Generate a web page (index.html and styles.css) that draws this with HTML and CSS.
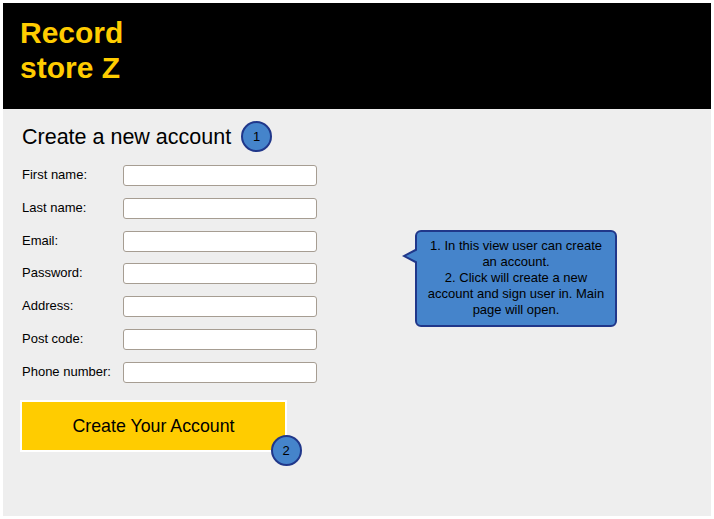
FILE: index.html
```html
<!DOCTYPE html>
<html lang="en">
<head>
<meta charset="utf-8">
<title>Record store Z - Create a new account</title>
<link rel="stylesheet" href="styles.css">
</head>
<body>
<div class="frame">
  <header class="masthead">
    <h1 class="brand">Record<br>store Z</h1>
  </header>
  <main class="content">
    <section class="form-col">
      <div class="title-row">
        <h2 class="title">Create a new account</h2>
        <span class="badge">1</span>
      </div>
      <form class="fields">
        <div class="field"><label class="field-label">First name:</label><input class="field-input" type="text"></div>
        <div class="field"><label class="field-label">Last name:</label><input class="field-input" type="text"></div>
        <div class="field"><label class="field-label">Email:</label><input class="field-input" type="text"></div>
        <div class="field"><label class="field-label">Password:</label><input class="field-input" type="password"></div>
        <div class="field"><label class="field-label">Address:</label><input class="field-input" type="text"></div>
        <div class="field"><label class="field-label">Post code:</label><input class="field-input" type="text"></div>
        <div class="field"><label class="field-label">Phone number:</label><input class="field-input" type="text"></div>
      </form>
      <div class="submit-wrap">
        <button class="submit" type="button">Create Your Account</button>
        <span class="badge badge-corner">2</span>
      </div>
    </section>
    <aside class="callout">
      1. In this view user can create an account.<br>
      2. Click will create a new account and sign user in. Main page will open.
    </aside>
  </main>
</div>
</body>
</html>
```

FILE: styles.css
```css
* { box-sizing: border-box; }

html, body {
  margin: 0;
  padding: 0;
  background: #ffffff;
}

body {
  font-family: "Liberation Sans", Arial, sans-serif;
  color: #000;
  padding: 3px;
}

.frame {
  width: 708px;
  height: 513px;
  display: flex;
  flex-direction: column;
  background: #eeeeee;
}

.masthead {
  height: 106px;
  background: #000;
  padding: 12px 17px 0;
}

.brand {
  margin: 0;
  font-size: 30px;
  line-height: 35px;
  font-weight: bold;
  color: #ffcc00;
}

.content {
  flex: 1;
  display: flex;
  align-items: flex-start;
  padding: 12px 0 0 19px;
}

.form-col {
  width: 295px;
  display: flex;
  flex-direction: column;
}

.title-row {
  display: flex;
  align-items: center;
  gap: 10px;
  height: 31px;
}

.title {
  margin: 0;
  font-size: 21.5px;
  line-height: 26px;
  font-weight: normal;
}

.badge {
  width: 31px;
  height: 31px;
  border-radius: 50%;
  background: #4584cb;
  border: 2px solid #20378a;
  display: flex;
  align-items: center;
  justify-content: center;
  font-size: 13px;
  color: #000;
  flex: none;
}

.fields {
  margin: 13px 0 0;
  display: flex;
  flex-direction: column;
  gap: 11.8px;
}

.field {
  display: flex;
  align-items: center;
  height: 21px;
}

.field-label {
  width: 101px;
  font-size: 13px;
  line-height: 15px;
  margin-top: -2px;
}

.field-input {
  width: 194px;
  height: 21px;
  margin: 0;
  padding: 0 4px;
  border: 1px solid #a69d92;
  border-radius: 3px;
  background: #fff;
  font: inherit;
}

.submit-wrap {
  position: relative;
  margin: 17px 0 0 -2px;
  width: 267px;
}

.submit {
  width: 267px;
  height: 52px;
  margin: 0;
  padding: 2px 0 0;
  background: #ffcc00;
  border: 2px solid #ffffff;
  font-family: "Liberation Sans", Arial, sans-serif;
  font-size: 17.8px;
  color: #000;
  cursor: pointer;
}

.badge-corner {
  position: absolute;
  right: -14.5px;
  bottom: -14.5px;
}

.callout {
  position: relative;
  margin: 109px 0 0 98px;
  width: 202px;
  padding: 6px 8px 7px;
  background: #4584cb;
  border: 2px solid #20378a;
  border-radius: 6px;
  font-size: 13px;
  line-height: 16px;
  text-align: center;
}

.callout::before,
.callout::after {
  content: "";
  position: absolute;
  width: 0;
  height: 0;
  border-style: solid;
  border-left-width: 0;
}

.callout::before {
  left: -15px;
  top: 16px;
  border-color: transparent #20378a transparent transparent;
  border-top-width: 8.5px;
  border-bottom-width: 8.5px;
  border-right-width: 15px;
}

.callout::after {
  left: -11px;
  top: 17.7px;
  border-color: transparent #4584cb transparent transparent;
  border-top-width: 6.8px;
  border-bottom-width: 6.8px;
  border-right-width: 12px;
}
```
